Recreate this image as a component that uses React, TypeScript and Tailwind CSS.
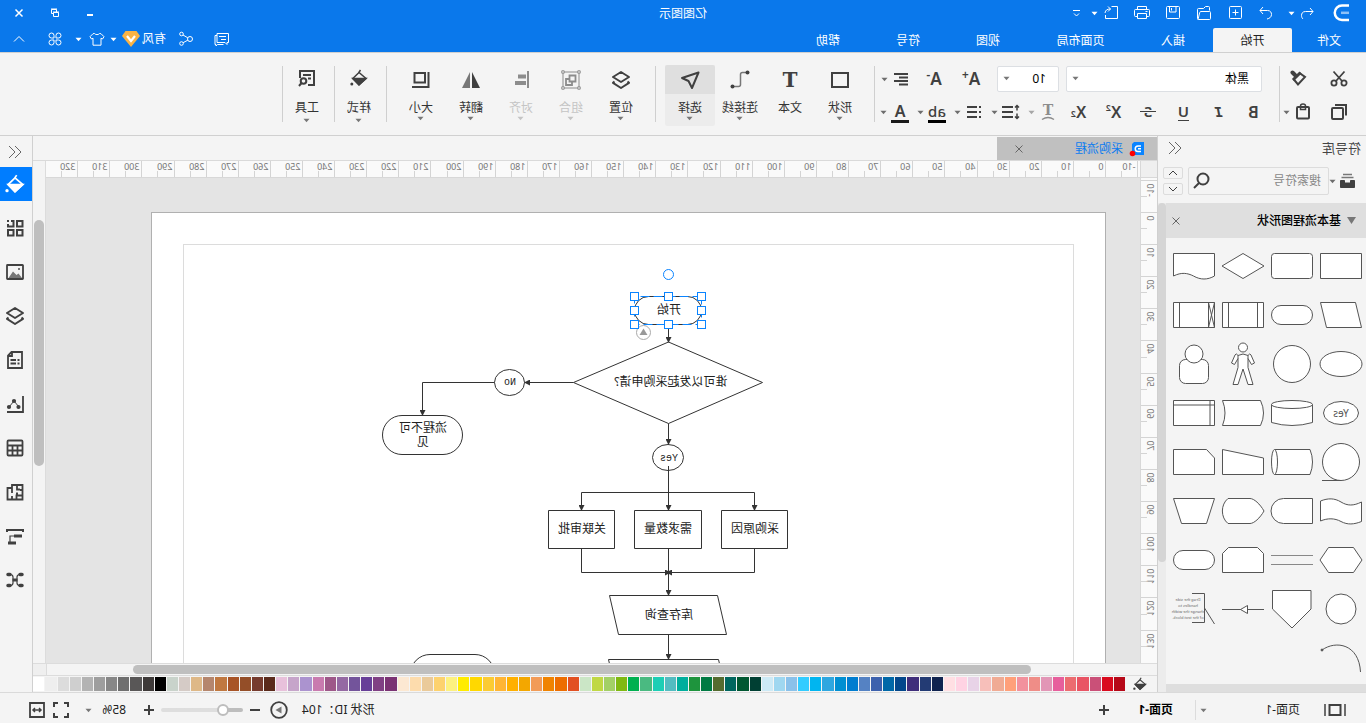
import type { ReactNode } from "react";
import { clsx } from "clsx";

const menuTabs = [
  { label: "文件", width: "w-[74px]" },
  { label: "开始", width: "w-[79px]", active: true },
  { label: "插入", width: "w-20" },
  { label: "页面布局", width: "w-[105px]" },
  { label: "视图", width: "w-20" },
  { label: "符号", width: "w-20" },
  { label: "帮助", width: "w-20" },
];

const palette = [
  "#b60818", "#d90a1e", "#ca5078", "#e95464", "#ec6c70", "#e75f9c", "#e296b6", "#ef8d87", "#f2919d",
  "#ffa07a", "#f0ab94", "#f7bfba", "#e8d3e7", "#ffd3e3", "#ffdfe3", "#0f234f", "#233b74", "#402e7b",
  "#03478b", "#0068a8", "#3d61ad", "#5582c3", "#007dd0", "#008fd2", "#2ea7e0", "#00b5f0", "#33ccff",
  "#8ac1ea", "#9fd7f0", "#cdeaf6", "#003f33", "#005731", "#00665e", "#556b2f", "#007a43", "#1e943d",
  "#00ae9d", "#53bcc1", "#1dceb5", "#4aba81", "#00b050", "#80b911", "#a3d066", "#c0d844", "#cbe6c6",
  "#e25022", "#ed6d00", "#f08300", "#f29b57", "#f3a700", "#ffb000", "#ffb534", "#fbcb33", "#ffd800",
  "#ffec00", "#fdf180", "#fdd26e", "#eaca9a", "#fddcad", "#fce8d2", "#7a3273", "#804084", "#673f98",
  "#73549b", "#9569a3", "#9e5889", "#c97baf", "#ab93cf", "#c6a5ca", "#e8c1db", "#5a2a1b", "#763b2e",
  "#944e28", "#a85427", "#c07840", "#b5866d", "#deb887", "#d5cbc6", "#c9d3cb", "#000000", "#3e3a39",
  "#595757", "#6f6f6f", "#878787", "#9e9e9e", "#b3b3b3", "#cfcfcf", "#dcdcdc", "#eeeeee", "#ffffff",
];

type IconProps = {
  size?: number;
  stroke?: number;
  className?: string;
  children: ReactNode;
};

function Icon({ size = 18, stroke = 1.5, className, children }: IconProps) {
  return (
    <svg
      width={size}
      height={size}
      viewBox={`0 0 ${size} ${size}`}
      fill="none"
      stroke="currentColor"
      strokeWidth={stroke}
      className={clsx("shrink-0", className)}
      aria-hidden="true"
    >
      {children}
    </svg>
  );
}

function Caret({ className }: { className?: string }) {
  return (
    <svg width="7" height="5" viewBox="0 0 7 5" className={clsx("shrink-0", className)} aria-hidden="true">
      <path d="M.5.8h6L3.5 4.2z" fill="currentColor" />
    </svg>
  );
}

function Bucket({ size = 18 }: { size?: number }) {
  return (
    <svg width={size} height={size} viewBox="0 0 18 18" fill="none" stroke="currentColor" strokeWidth="1.5" className="shrink-0" aria-hidden="true">
      <path d="M7.5 1l2 3M9 3.5l6.2 6L9 15.8 2 9.5z" />
      <path d="M2 9.5h13.2L9 16z" fill="currentColor" />
      <circle cx="16.2" cy="15" r="1.5" fill="currentColor" stroke="none" />
    </svg>
  );
}

function Layers() {
  return (
    <Icon size={20} stroke={2}>
      <path d="M10 2l8 5-8 5-8-5zM3.5 11.5L2 12.8l8 5.2 8-5.2-1.5-1.3" strokeLinejoin="round" />
    </Icon>
  );
}

type ToolProps = { label: string; className?: string; children: ReactNode };

function Tool({ label, className, children }: ToolProps) {
  return (
    <button type="button" aria-label={label} className={clsx("flex items-center justify-center h-[26px] shrink-0", className)}>
      {children}
    </button>
  );
}

function SplitTool({ label, className, children }: ToolProps) {
  return (
    <button type="button" aria-label={label} className={clsx("flex items-center h-[26px] shrink-0", className)}>
      <span className="w-[26px] flex items-center justify-center">{children}</span>
      <Caret className="opacity-75" />
    </button>
  );
}

function TitleBar() {
  return (
    <div className="grid grid-cols-[1fr_auto_1fr] items-center h-[26px] text-white">
      <div className="flex items-center">
        <svg width="16" height="20" viewBox="0 0 16 20" className="ml-[17px] mr-4" fill="none" stroke="#fff" aria-hidden="true">
          <path d="M0 3h6.5a7 7 0 0 0 0 0M16 3H9a7 7 0 0 0 0 14h7" strokeWidth="2.5" stroke="none" />
          <path d="M0 2.5h7a7 7 0 0 1 0 14.5H0" strokeWidth="2.5" />
          <path d="M0 9.800h8" strokeWidth="2.5" stroke="#8ec1f7" />
        </svg>
        <Tool label="撤销" className="w-5">
          <Icon size={16} stroke={1}><path d="M5 3L2 6.5 5 10M2 6.5h7.5c3 0 4 2 4 4 0 1.5-.5 2.5-1.5 3.5" /></Icon>
        </Tool>
        <Tool label="撤销列表" className="w-2.5"><Caret /></Tool>
        <Tool label="重做" className="w-[31px] ml-[5px]">
          <Icon size={16} stroke={1}><path d="M11 2l3 3.5L11 9M14 5.5H6.5c-3 0-4 2-4 4 0 2.5 2 4 4.5 4.5" /></Icon>
        </Tool>
        <Tool label="新建" className="w-[31px]">
          <Icon size={16} stroke={1}><rect x="1.5" y="1.5" width="12" height="12" rx="1" /><path d="M4.5 7.5h6M7.5 4.5v6" /></Icon>
        </Tool>
        <Tool label="打开" className="w-[31px]">
          <Icon size={16} stroke={1}><path d="M2.5 5.5v-3q0-1 1-1h3l2 2h5q1 0 1 1v9q0 1-1 1h-11q-1 0-1-1v-6q0-1 1-1H11q1 0 1.3 1l1.7 7" /></Icon>
        </Tool>
        <Tool label="保存" className="w-[31px]">
          <Icon size={16} stroke={1}><rect x="1.5" y="1.5" width="13" height="12" rx="1" /><path d="M5 1.5V7h6.500V1.5M9.5 3v2.5" /></Icon>
        </Tool>
        <Tool label="打印" className="w-[31px]">
          <Icon size={18} stroke={1}><path d="M4.5 5.5v-3h9v3M4.5 12.5h-2q-1 0-1-1v-5q0-1 1-1h13q1 0 1 1v5q0 1-1 1h-2M4.5 9.5h9v5h-9zM3.5 7.5h2" /></Icon>
        </Tool>
        <Tool label="导出" className="w-[31px]">
          <Icon size={16} stroke={1}><path d="M6 1.5H1.500v12h12V10M11 1.500L8.500 4 11 6.500M8.500 4c3.500 0 5 1 5.500 4M5.500 1.500h2" /></Icon>
        </Tool>
        <Tool label="导出选项" className="w-2.5 -ml-1"><Caret /></Tool>
        <Tool label="更多" className="w-5 ml-1">
          <Icon size={10} stroke={1}><path d="M1 2.5h7M2 5.5L4.5 8 7 5.5" /></Icon>
        </Tool>
      </div>
      <h1 className="text-xs pt-0.5">亿图图示</h1>
      <div className="flex justify-end">
        <Tool label="最小化" className="w-9"><Icon size={10} stroke={2}><path d="M2 7h6" /></Icon></Tool>
        <Tool label="还原" className="w-[34px]">
          <Icon size={10} stroke={1}><path d="M1.5 4.5h5v4h-5zM3.5 4V1.5h5v4H7M1 4h6M3 1h6" /></Icon>
        </Tool>
        <Tool label="关闭" className="w-[38px]"><Icon size={10}><path d="M1.5 1.5l7 7M8.5 1.5l-7 7" /></Icon></Tool>
      </div>
    </div>
  );
}

function MenuBar() {
  return (
    <div className="flex items-end justify-between h-[26px] text-white text-xs">
      <nav className="flex">
        {menuTabs.map((tab) => (
          <button
            key={tab.label}
            type="button"
            className={clsx("h-6 pt-0.5 text-center shrink-0", tab.width, tab.active && "bg-[#f4f4f4] text-[#222222] rounded-t-xs")}
          >
            {tab.label}
          </button>
        ))}
      </nav>
      <div className="flex items-center">
        <Tool label="评论" className="w-9">
          <Icon size={16} stroke={1}><path d="M1.5 2.5H13v9H5l-2 2v-2H1.500zM13 4.500h2v9h-1v1.500l-1.500-1.500h-6M4 5.500h7M4 8.500h5" /></Icon>
        </Tool>
        <Tool label="分享" className="w-9">
          <Icon size={16} stroke={1}><circle cx="4" cy="8" r="2.5" /><circle cx="12.5" cy="3" r="1.8" /><circle cx="12.5" cy="12.5" r="1.8" /><path d="M6.2 6.8L11 4M6.2 9.2l4.7 2.5" /></Icon>
        </Tool>
        <button type="button" className="flex items-center w-12 h-[26px] pl-0.5 gap-0.5">
          <span className="w-6 whitespace-nowrap">有风</span>
          <svg width="18" height="16" viewBox="0 0 18 16" className="shrink-0" aria-hidden="true">
            <path d="M3.5 0h11L18 5 9 16 0 5z" fill="#fab345" />
            <path d="M5 5l4 5 4-5" fill="none" stroke="#fff" strokeWidth="2.2" />
          </svg>
        </button>
        <Tool label="账户菜单" className="w-3"><Caret /></Tool>
        <Tool label="主题" className="w-[22px]">
          <Icon size={16} stroke={1}><path d="M5.5 2.5c1 1.5 4 1.5 5 0l1.500.2 3 3-1.500 2.300-1.500-.8v7H4v-7L2.500 8 1 5.700l3-3z" /></Icon>
        </Tool>
        <Tool label="主题菜单" className="w-3.5"><Caret /></Tool>
        <Tool label="应用" className="w-[34px]">
          <Icon size={16} stroke={1}>
            <path d="M7 7H4.5A2.5 2.5 0 1 1 7 4.5zM9 7h2.5A2.5 2.5 0 1 0 9 4.5zM7 9H4.5A2.5 2.5 0 1 0 7 11.5zM9 9h2.5A2.5 2.5 0 1 1 9 11.5z" />
          </Icon>
        </Tool>
        <Tool label="收起功能区" className="w-[38px]"><Icon size={12} stroke={1}><path d="M1 8.5L6 3.5l5 5" /></Icon></Tool>
      </div>
    </div>
  );
}

function Divider() {
  return <div className="w-px h-14 mt-px bg-[#cfcfcf] shrink-0" />;
}

type RibbonButtonProps = {
  label: string;
  icon: ReactNode;
  active?: boolean;
  disabled?: boolean;
  caret?: boolean;
  loose?: boolean;
};

function RibbonButton({ label, icon, active, disabled, caret = true, loose }: RibbonButtonProps) {
  return (
    <button
      type="button"
      disabled={disabled}
      className={clsx(
        "w-[50px] h-[61px] flex flex-col items-center shrink-0 rounded-xs overflow-hidden",
        active && "bg-[#ececec]",
        disabled ? "text-[#c4c4c4]" : "text-[#333333]"
      )}
    >
      <span
        className={clsx(
          "w-full h-[29px] flex items-center justify-center",
          active && "bg-[#dfdfdf]",
          loose && "pb-1",
          disabled ? "text-[#8c8c8c]" : "text-[#404040]"
        )}
      >
        {icon}
      </span>
      <span className="mt-1.5 h-4 leading-4 whitespace-nowrap">{label}</span>
      {caret && <Caret className={clsx(!disabled && "text-[#777777]", loose && "mt-0.5")} />}
    </button>
  );
}

function Ribbon() {
  return (
    <div className="flex items-start h-[84px] pt-3 border-y border-[#d0d0d0] text-[#404040] text-xs">
      <div className="w-[86px] pt-px shrink-0 flex flex-col gap-[7px]">
        <div className="flex pl-3.5">
          <Tool label="剪切" className="w-[26px]">
            <Icon stroke={1.8}><circle cx="4" cy="13" r="2.6" /><circle cx="14" cy="13" r="2.6" /><path d="M3.5 1.5L12 11M14.500 1.500L6 11" /></Icon>
          </Tool>
          <Tool label="格式刷" className="w-[26px] ml-[15px]">
            <Icon stroke={2}>
              <path d="M12 5l2.500-2.500" strokeWidth="4" strokeLinecap="round" />
              <path d="M7.500 3L2 7l7 7.500L13.500 9" />
              <path d="M7.500 3.500L13 9" strokeWidth="3" strokeLinecap="square" />
            </Icon>
          </Tool>
        </div>
        <div className="flex pl-3.5">
          <Tool label="复制" className="w-[26px]">
            <Icon stroke={2}><rect x="5" y="5" width="11" height="11" rx="1" /><path d="M2 12.5V2h11" /></Icon>
          </Tool>
          <Tool label="粘贴" className="w-[26px] ml-2.5">
            <Icon stroke={2}><rect x="3" y="4" width="12" height="11.5" rx="1" /><path d="M6.5 3v3.500h5V3a2.500 2 0 0 0-5 0z" strokeWidth="1.5" /></Icon>
          </Tool>
          <Caret className="mt-[11px] opacity-75" />
        </div>
      </div>
      <Divider />

      <div className="w-[404px] pt-px shrink-0 flex flex-col gap-[7px]">
        <div className="flex items-center pl-[17px]">
          <label className="relative flex">
            <select aria-label="字体" className="appearance-none w-[196px] h-[26px] pl-3 bg-white border border-[#dcdfe3] rounded-xs text-black">
              <option>黑体</option>
            </select>
            <Caret className="absolute right-1.5 top-[10px] text-[#777777]" />
          </label>
          <label className="relative flex ml-[7px]">
            <select aria-label="字号" className="appearance-none w-[62px] h-[26px] pl-3 bg-white border border-[#dcdfe3] rounded-xs text-black">
              <option>10</option>
            </select>
            <Caret className="absolute right-1.5 top-[10px] text-[#777777]" />
          </label>
          <Tool label="增大字号" className="w-[26px] ml-[13px] text-[17px] font-semibold">A<sup className="text-xs -top-1">+</sup></Tool>
          <Tool label="减小字号" className="w-[26px] ml-[11px] text-[17px] font-semibold">A<sup className="text-xs -top-1">-</sup></Tool>
          <SplitTool label="对齐方式" className="ml-[7px]">
            <Icon size={14} stroke={2}><path d="M0 2h14M0 5.5h9M0 9h14M0 12.5h9" /></Icon>
          </SplitTool>
        </div>
        <div className="flex items-center pl-2">
          <Tool label="加粗" className="w-[35px] text-base font-semibold">B</Tool>
          <Tool label="斜体" className="w-[35px] text-sm italic font-bold font-['DejaVu_Sans_Mono',monospace]">I</Tool>
          <Tool label="下划线" className="w-[35px]">
            <span className="w-[11px] h-[17px] leading-[15px] text-[15px] font-semibold border-b border-current">U</span>
          </Tool>
          <Tool label="删除线" className="w-[35px]">
            <svg width="18" height="22" viewBox="0 0 18 22" aria-hidden="true">
              <text x="9" y="16" textAnchor="middle" fontSize="15" fontWeight="600" fill="currentColor">S</text>
              <path d="M1 10.5h16" stroke="#f4f4f4" strokeWidth="3" />
              <path d="M1 10.5h16" stroke="currentColor" />
            </svg>
          </Tool>
          <Tool label="上标" className="w-[35px] text-base font-semibold">X<sup className="text-[9px] -top-1">2</sup></Tool>
          <Tool label="下标" className="w-[35px] text-base font-semibold">X<sub className="text-[9px]">2</sub></Tool>
          <div className="flex gap-1">
            <SplitTool label="文字效果" className="text-[#8c8c8c]">
              <svg width="16" height="22" viewBox="0 0 16 22" aria-hidden="true">
                <text x="8" y="14" textAnchor="middle" fontSize="14" fontWeight="700" fontFamily="DejaVu Serif, serif" fill="currentColor">T</text>
                <path d="M2 18.5q6-4 12 0" fill="none" stroke="currentColor" strokeWidth="1.5" />
              </svg>
            </SplitTool>
            <SplitTool label="行距">
              <Icon><path d="M7 4h11M7 9h11M7 14h11" strokeWidth="2" /><path d="M3 2.5v5M3 10.5v5M1 4.5l2-2 2 2M1 13.5l2 2 2-2" /></Icon>
            </SplitTool>
            <SplitTool label="项目符号">
              <Icon size={16} stroke={2}><path d="M5 3h10M5 8h10M5 13h10M1 3h2M1 8h2M1 13h2" /></Icon>
            </SplitTool>
            <SplitTool label="突出显示">
              <span className="w-[18px] h-[21px] leading-[18px] text-[15px] font-medium text-center border-b-[3px] border-black">ab</span>
            </SplitTool>
            <SplitTool label="字体颜色">
              <span className="w-[18px] h-[21px] leading-[18px] text-base font-semibold text-center border-b-[3px] border-[#1a1a1a]">A</span>
            </SplitTool>
          </div>
        </div>
      </div>
      <Divider />

      <div className="flex w-[218px] pl-[9px] shrink-0">
        <RibbonButton label="形状" icon={<Icon size={20} stroke={2}><path d="M2 3h16v14H2z" /></Icon>} />
        <RibbonButton label="文本" caret={false} icon={<span className="text-xl leading-none font-bold font-['DejaVu_Serif',serif]">T</span>} />
        <RibbonButton
          label="连接线"
          icon={<Icon size={20}><path d="M3 2.5h4.500q2 0 2 2v10q0 2 2 2H17" stroke="#777777" /><circle cx="2.500" cy="2.500" r="2" fill="currentColor" stroke="none" /><circle cx="17.500" cy="16.500" r="2" fill="currentColor" stroke="none" /></Icon>}
        />
        <RibbonButton label="选择" active icon={<Icon size={20} stroke={2}><path d="M1.5 2.500l16.500 5.500-6.500 3-3.500 7z" strokeLinejoin="round" /></Icon>} />
      </div>
      <Divider />

      <div className="flex w-[268px] pl-[9px] shrink-0">
        <RibbonButton label="位置" icon={<Layers />} />
        <RibbonButton
          label="组合"
          disabled
          icon={<Icon size={20} stroke={1}><path d="M2 2h16v16H2z" /><path d="M5.5 5.5h6v6h-6zM9 12v3h6V9h-3" strokeWidth="1.8" /><path d="M.8.8h2.400v2.400H.8zM16.800.8h2.400v2.400h-2.400zM.8 16.800h2.400v2.400H.8zM16.800 16.800h2.400v2.400h-2.400z" fill="#f4f4f4" /></Icon>}
        />
        <RibbonButton label="对齐" disabled icon={<Icon size={20}><path d="M3 1v17" strokeWidth="2" /><path d="M5 6.5h8M5 13h11" strokeWidth="4" /></Icon>} />
        <RibbonButton label="翻转" icon={<Icon size={20}><path d="M9 2v16H1z" fill="currentColor" stroke="none" /><path d="M11 2v16h8z" fill="#777777" stroke="none" /></Icon>} />
        <RibbonButton label="大小" icon={<Icon size={20} stroke={2}><path d="M6 3h10.5v9.5H6zM2.5 2v15H19" /></Icon>} />
      </div>
      <Divider />
      <div className="w-[51px] pl-0.5 shrink-0"><RibbonButton label="样式" loose icon={<Bucket size={18} />} /></div>
      <Divider />
      <div className="w-[51px] pl-0.5 shrink-0">
        <RibbonButton label="工具" loose icon={<Icon size={18} stroke={2}><path d="M8 16H2V2h14v7M5 6h8M5 9.5h3" /><circle cx="12.5" cy="12" r="2.8" /><path d="M14.5 14l2.5 3" /></Icon>} />
      </div>
      <Divider />
    </div>
  );
}

/* every symbol sits in a 49 x 49 cell */
const symbols: { name: string; art: ReactNode }[] = [
  { name: "流程", art: <path d="M4.5 11.5h41v25h-41z" /> },
  { name: "圆角流程", art: <rect x="4.5" y="11.5" width="41" height="25" rx="3" /> },
  { name: "判定", art: <path d="M4 24L25 11.5 46 24 25 36.5z" /> },
  { name: "文档", art: <path d="M4.5 11.5h41V34c-8-4-14-3-20 0-7 4-14 4-21 0z" /> },
  { name: "数据", art: <path d="M10.5 11.5h35l-6 25h-35z" /> },
  { name: "终结符", art: <rect x="4.5" y="14.5" width="41" height="19" rx="9.5" /> },
  { name: "预定义流程", art: <path d="M4.5 11.5h41v25h-41zM10.5 11.5v25M39.5 11.5v25" /> },
  { name: "准备流程", art: <path d="M4.5 11.5h41v25h-41zM10.5 11.5v25M39.5 11.5v25M4.5 11.5l6 25M10.5 11.5l-6 25" /> },
  { name: "椭圆", art: <ellipse cx="25" cy="24" rx="21" ry="12.5" /> },
  { name: "圆", art: <circle cx="25" cy="24" r="18.5" /> },
  {
    name: "人",
    art: (
      <>
        <circle cx="25" cy="7.5" r="4.5" />
        <path d="M20 15.5q5-3 10 0v12l5 17h-5L25 29l-5 15.5h-5l5-17zM20 15.5q-2-3-3-.5l-3.500 8 3 1.500 3.500-6M30 15.500q2-3 3-.5l3.500 8-3 1.500-3.500-6" />
      </>
    ),
  },
  { name: "用户", art: <><rect x="10.5" y="19.5" width="29" height="24" rx="6" /><circle cx="25" cy="14" r="9" /></> },
  {
    name: "是",
    art: (
      <>
        <ellipse cx="25" cy="24" rx="17.5" ry="11.5" />
        <text x="25" y="28" textAnchor="middle" fontSize="10" fill="#555555" stroke="none">Yes</text>
      </>
    ),
  },
  { name: "数据库", art: <><path d="M4.5 15.5v18q20.5 6 41 0v-18" /><ellipse cx="25" cy="15.5" rx="20.5" ry="4" /></> },
  { name: "存储数据", art: <path d="M7.5 11.5h38q-5 12.5 0 25h-38q-6-12.5 0-25z" /> },
  { name: "内部存储", art: <path d="M4.5 11.5h41v25h-41zM4.5 16h41M9 11.5v25" /> },
  { name: "顺序数据", art: <><circle cx="25" cy="24" r="18.5" /><path d="M25 42.5h19" /></> },
  { name: "直接数据", art: <><path d="M42.5 11.5H7q-5 12.5 0 25h35.5" /><ellipse cx="42.5" cy="24" rx="3" ry="12.5" /></> },
  { name: "手动输入", art: <path d="M4.5 20l41-8.5v25h-41z" /> },
  { name: "卡片", art: <path d="M12.5 11.5h33v25h-41V20z" /> },
  { name: "纸带", art: <path d="M4.5 15c8 4 14 4 20.5 0s13-4 20.5-1v20c-7-3-14-3-20.5.5s-13 3-20.5 0z" /> },
  { name: "延期", art: <path d="M4.5 11.5h29a12.5 12.5 0 0 1 0 25h-29z" /> },
  { name: "显示", art: <path d="M4 24c4-7 10-12.5 14-12.5h22c7.5 6 7.5 19 0 25H18C14 36.5 8 31 4 24z" /> },
  { name: "手动操作", art: <path d="M4.5 11.5h41l-8 25h-25z" /> },
  { name: "准备", art: <path d="M4 24l8.5-12.5h25L46 24l-8.5 12.5h-25z" /> },
  { name: "并行", art: <path d="M4 19.5h42M4 28.5h42" stroke="#888888" /> },
  { name: "循环界限", art: <path d="M10.5 11.5h29l6 6v19h-41v-19z" /> },
  { name: "开始终结", art: <rect x="4.5" y="14.5" width="41" height="19" rx="9.5" /> },
  { name: "页面内引用", art: <circle cx="25" cy="24" r="15" /> },
  { name: "跨页引用", art: <path d="M6 5.5h38.5V24L25 43 6 24z" /> },
  { name: "箭头", art: <><path d="M4 24.5h42" /><path d="M20.5 20.5v8l7-4z" /></> },
  {
    name: "注释",
    art: (
      <>
        <path d="M27 8.5H14.5v29H27M14.5 23l-10 16" fill="none" />
        <g fontSize="4" textAnchor="middle" fill="#666666" stroke="none">
          <text x="31" y="16">Drag the side</text>
          <text x="31" y="22">handles to</text>
          <text x="31" y="28">change the width</text>
          <text x="31" y="34">of the text block.</text>
        </g>
      </>
    ),
  },
  { name: "弧线", art: <><path d="M44 16C30 6 7 10 5.5 38" fill="none" /><circle cx="44" cy="16" r="1" fill="#555555" /></> },
];

function Chevrons() {
  return (
    <Icon size={14} stroke={1} className="text-[#666666]">
      <path d="M7 1L1 7l6 6M13 1L7 7l6 6" />
    </Icon>
  );
}

function SymbolLibrary() {
  return (
    <aside className="w-[209px] shrink-0 flex flex-col border-r border-[#d0d0d0] text-xs">
      <div className="flex items-center justify-between h-6 pl-[5px] pr-2.5">
        <h2 className="pt-0.5 text-[13px] text-[#444444]">符号库</h2>
        <button type="button" aria-label="收起符号库"><Chevrons /></button>
      </div>
      <div className="flex items-center h-[43px] pl-[11px] pb-[5px] pt-1 text-[#404040]">
        <button type="button" aria-label="符号库菜单" className="flex items-center w-[26px] gap-1">
          <svg width="15" height="16" viewBox="0 0 15 16" fill="none" stroke="currentColor" className="shrink-0" aria-hidden="true">
            <path d="M3 1.5h9M1.5 4.5h12" strokeWidth="1.5" stroke="#777777" />
            <path d="M.5 7.500h4V10h6V7.500h4v7H.5z" fill="currentColor" />
          </svg>
          <Caret className="opacity-75" />
        </button>
        <div className="flex items-center w-[141px] h-7 border border-[#dcdcdc] rounded-xs pl-[7px] pr-1">
          <input aria-label="搜索符号" placeholder="搜索符号" className="min-w-0 flex-1 outline-none placeholder:text-[#888888]" />
          <button type="button" aria-label="搜索">
            <Icon size={18} stroke={2}><circle cx="8" cy="7" r="5.5" /><path d="M12 11l5 5" /></Icon>
          </button>
        </div>
        <div className="flex flex-col gap-1 ml-[5px]">
          <button type="button" aria-label="上一个" className="flex items-center justify-center w-5 h-3 border border-[#dcdcdc] rounded-xs">
            <Icon size={10} stroke={1}><path d="M1 7l4-4 4 4" /></Icon>
          </button>
          <button type="button" aria-label="下一个" className="flex items-center justify-center w-5 h-3 border border-[#dcdcdc] rounded-xs">
            <Icon size={10} stroke={1}><path d="M1 3l4 4 4-4" /></Icon>
          </button>
        </div>
      </div>
      <div className="flex-1 min-h-0 flex">
        <div className="w-[200px] flex flex-col overflow-hidden">
          <div className="flex items-center h-[35px] shrink-0 pl-2.5 pr-1.5 bg-[#dfdfdf]">
            <svg width="9" height="7" viewBox="0 0 9 7" aria-hidden="true"><path d="M0 0h9L4.5 7z" fill="#777777" /></svg>
            <h3 className="ml-1.5 flex-1 font-medium text-black">基本流程图形状</h3>
            <button type="button" aria-label="关闭分类" className="text-[#666666]">
              <Icon size={8} stroke={1}><path d="M.5.5l7 7M7.5.5l-7 7" /></Icon>
            </button>
          </div>
          <div className="flex-1 min-h-0 overflow-hidden grid grid-cols-[repeat(4,49px)] auto-rows-[49px] pt-1">
            {symbols.map((symbol) => (
              <button key={symbol.name} type="button" aria-label={symbol.name}>
                <svg width="49" height="49" viewBox="0 0 49 49" fill="#fff" stroke="#555555" aria-hidden="true">
                  {symbol.art}
                </svg>
              </button>
            ))}
          </div>
          <div className="h-2 shrink-0 bg-[#dedede]" />
        </div>
        <div className="w-2 bg-[#ececec]">
          <div className="w-2 h-[359px] rounded-full bg-[#d5d5d5]" />
        </div>
      </div>
    </aside>
  );
}

const PX_PER_MM = 3.212;
const RULER_ORIGIN = 34;
const columnMarks = Array.from({ length: 34 }, (_, i) => i * 10 - 10);
const rowMarks = Array.from({ length: 15 }, (_, i) => i * 10 - 10);
const at = (mm: number) => Math.round(RULER_ORIGIN + mm * PX_PER_MM) + 0.5;

function HorizontalRuler() {
  return (
    <div className="h-[17px] shrink-0 bg-[#fafafa] border-b border-[#d8d8d8]">
      <svg className="block w-full h-4" stroke="#d4d4d4" aria-hidden="true">
        {columnMarks.map((mm) => (
          <g key={mm}>
            <path d={`M${at(mm)} 0v16M${at(mm + 5)} 10v6`} />
            <text x={at(mm) + 2} y="9" fontSize="9" fill="#777777" stroke="none">{mm}</text>
          </g>
        ))}
      </svg>
    </div>
  );
}

function VerticalRuler() {
  return (
    <div className="w-[17px] shrink-0 flex flex-col border-r border-[#d8d8d8]">
      <div className="h-[17px] shrink-0 bg-[#efefef] border-b border-[#d8d8d8]" />
      <svg className="block flex-1 min-h-0 w-4 bg-[#fafafa]" stroke="#d4d4d4" aria-hidden="true">
        {rowMarks.map((mm) => (
          <g key={mm}>
            <path d={`M0 ${at(mm)}h16M10 ${at(mm + 5)}h6`} />
            <text transform={`translate(10 ${at(mm) + 3}) rotate(-90)`} textAnchor="end" fontSize="9" fill="#777777" stroke="none">
              {mm}
            </text>
          </g>
        ))}
      </svg>
    </div>
  );
}

const handles = [
  [403.5, 83.5], [436.5, 83.5], [470.5, 83.5],
  [403.5, 97.5], [470.5, 97.5],
  [403.5, 111.5], [436.5, 111.5], [470.5, 111.5],
];

const connectors = [
  "M436.5 111.5V129",
  "M531.5 169.5H580",
  "M610.5 169.5h72V202",
  "M436.5 210.5V231",
  "M436.5 253V297",
  "M436.5 279.5h-86V297",
  "M436.5 279.5h87V297",
  "M350.5 335.5v24H438",
  "M523.5 335.5v24H435",
  "M436.5 335.5V382",
  "M436.5 421.5V446",
];

function Flowchart() {
  return (
    <svg width="953" height="1300" viewBox="0 0 953 1300" className="block" fill="none" stroke="#333333">
      <defs>
        <marker id="arrow" markerUnits="userSpaceOnUse" markerWidth="6" markerHeight="6" refX="5" refY="3" orient="auto">
          <path d="M0 0l6 3-6 3z" fill="#333333" stroke="none" />
        </marker>
      </defs>
      <rect x="31.5" y="31.5" width="890" height="1230" stroke="#dcdcdc" />

      <rect x="403.5" y="83.5" width="67" height="28" rx="14" />
      <path d="M342.5 169.5l94-40.5 95 40.5-95 41z" />
      <ellipse cx="595.5" cy="169.5" rx="15" ry="13" />
      <rect x="642.5" y="202.5" width="80" height="39" rx="19.5" />
      <ellipse cx="437" cy="244.5" rx="15.5" ry="13" />
      <path d="M317.5 297.5h66v38h-66zM403.5 297.5h67v38h-67zM490.5 297.5h66v38h-66z" />
      <path d="M378.5 421.5l9-39h108l-9 39zM377.5 485.5l9-39h110l-9 39z" />
      <rect x="610.5" y="441.5" width="84" height="39" rx="19.5" />

      {connectors.map((d) => (
        <path key={d} d={d} markerEnd="url(#arrow)" />
      ))}

      <g fontSize="12" textAnchor="middle" fill="#222222" stroke="none">
        <text x="436" y="101">开始</text>
        <text x="434" y="173">谁可以发起采购申请?</text>
        <text x="682" y="219">流程不可</text>
        <text x="682" y="233">见</text>
        <text x="350" y="320">采购原因</text>
        <text x="437" y="320">需求数量</text>
        <text x="523" y="320">关联审批</text>
        <text x="436" y="406">库存查询</text>
        <g fontSize="10" fontFamily="Liberation Mono, monospace">
          <text x="595" y="172">No</text>
          <text x="436" y="248">Yes</text>
        </g>
      </g>

      <rect x="403.5" y="83.5" width="67" height="28" stroke="#0a84ff" strokeDasharray="9 4" />
      <circle cx="461.5" cy="119.5" r="7" fill="#fff" stroke="#aaaaaa" />
      <path d="M461.5 115.5l4 6.5h-8z" fill="#999999" stroke="none" />
      <g fill="#fff" stroke="#0a84ff">
        <circle cx="436.5" cy="61.5" r="5" />
        {handles.map(([x, y]) => (
          <rect key={`${x}-${y}`} x={x - 4} y={y - 4} width="8" height="8" />
        ))}
      </g>
    </svg>
  );
}

function Workspace() {
  return (
    <main className="flex-1 min-w-0 flex flex-col">
      <div className="flex h-[25px] shrink-0 pt-px border-b border-[#dadada]">
        <div className="flex items-center w-40 pl-[13px] pr-[18px] bg-[#c0c0c0] text-xs">
          <svg width="15" height="16" viewBox="0 0 15 16" className="shrink-0" aria-hidden="true">
            <path d="M0 1h10l2 2v11H0z" fill="#0a84ff" />
            <path d="M3 5h3a2.5 2.5 0 0 1 0 5.5H3M3 7.8h3" fill="none" stroke="#fff" strokeWidth="1.5" />
            <circle cx="11.5" cy="12.5" r="2.8" fill="#ff0000" />
          </svg>
          <button type="button" className="ml-1.5 flex-1 text-left text-[#0a7bf0]">采购流程</button>
          <button type="button" aria-label="关闭文档" className="text-[#666666]">
            <Icon size={8} stroke={1}><path d="M.5.5l7 7M7.5.5l-7 7" /></Icon>
          </button>
        </div>
      </div>
      <div className="flex-1 min-h-0 flex">
        <VerticalRuler />
        <div className="flex-1 min-w-0 flex flex-col">
          <HorizontalRuler />
          <div className="flex-1 min-h-0 overflow-hidden bg-[#e4e4e4] pl-[34px] pt-[34px]">
            <div className="w-[955px] bg-white border border-[#b0b0b0]">
              <Flowchart />
            </div>
          </div>
        </div>
        <div className="w-[13px] shrink-0 border-l border-[#dcdcdc] pt-[59px] pl-px">
          <div className="w-2.5 h-[246px] rounded-full bg-[#bfbfbf]" />
        </div>
      </div>
      <div className="h-[13px] shrink-0 flex border-y border-[#dcdcdc]">
        <div className="flex-1 flex items-center pl-[126px] pr-[86px] border-r border-[#dcdcdc]">
          <div className="flex-1 h-[9px] rounded-full bg-[#bfbfbf]" />
        </div>
        <div className="w-[13px] bg-[#efefef]" />
      </div>
      <div className="h-4 shrink-0 flex items-center pl-2.5 pr-px text-[#404040]">
        <button type="button" aria-label="填充颜色" className="mr-2"><Bucket size={14} /></button>
        <div className="flex-1 flex gap-px">
          {palette.map((color) => (
            <button key={color} type="button" aria-label={color} className="flex-1 h-3.5" style={{ backgroundColor: color }} />
          ))}
        </div>
      </div>
    </main>
  );
}

const railItems = [
  {
    label: "符号",
    icon: <Icon stroke={2}><path d="M1.5 2H7v5.5H1.500zM1.500 11H7v5.500H1.500zM10.500 11H16v5.500h-5.500zM13 2h-2.500v5.500H16V5M15 2h2" /></Icon>,
  },
  {
    label: "图片",
    icon: <Icon stroke={1.8}><rect x="1" y="2" width="16" height="14" rx=".5" /><path d="M2 15l3.500-4.500 2 1.500L11 8.500l4.500 6.500z" fill="#777777" stroke="none" /><path d="M4 6h2" stroke="#777777" /></Icon>,
  },
  { label: "图层", icon: <Layers /> },
  {
    label: "页面",
    icon: <Icon stroke={1.8}><path d="M2 1h10.500L16 4.500V17H2zM12 1v4h4M8 9h5.500M8 12.500h5.500M4.500 9h2M4.500 12.500h2" transform="matrix(1 0 0 1 0 0)" /></Icon>,
  },
  {
    label: "图表",
    icon: <Icon stroke={1.8}><path d="M1 1v16h16" /><path d="M5 12l5-6 5 6" strokeWidth="1" /><circle cx="5.5" cy="12" r="1.2" fill="currentColor" /><circle cx="10" cy="6" r="1.2" fill="currentColor" /><circle cx="15" cy="12" r="1.2" fill="currentColor" /></Icon>,
  },
  {
    label: "表格",
    icon: <Icon stroke={1.8}><rect x="1.5" y="1.5" width="15" height="15" rx="1" /><path d="M1.5 6.5h15M1.5 11.5h15M6.5 6.5v10M11.5 6.5v10" /></Icon>,
  },
  {
    label: "平面图",
    icon: <Icon stroke={1.8}><path d="M1.5 2H12v3h4.500v11.500h-15zM1.500 7H4M7 2v4.500H4M1.500 12.500h6v4M6 10.500h2M12 6v4M12 13v3" /></Icon>,
  },
  {
    label: "甘特图",
    icon: <Icon stroke={2}><path d="M0 3h18M1 3v2M17 3v2" /><path d="M2 9h8M8 16h8" strokeWidth="3" /><path d="M9 9h5v6" strokeWidth="1.2" /></Icon>,
  },
  {
    label: "思维导图",
    icon: (
      <Icon stroke={1.2}>
        <path d="M4 3.5q3 0 3 2.5v6q0 2.5-3 2.5M14 3.5q-3 0-3 2.5v6q0 2.5 3 2.5" />
        <path d="M2 3.5h2M14 3.5h2M2 14.5h2M14 14.5h2" strokeWidth="3.5" strokeLinecap="round" />
        <path d="M6.5 9h5" strokeWidth="3" />
      </Icon>
    ),
  },
];

function ToolRail() {
  return (
    <aside className="w-[33px] shrink-0 flex flex-col border-l border-[#d0d0d0] text-[#404040]">
      <button type="button" aria-label="展开面板" className="h-[31px] pl-0.5 flex items-center justify-center"><Chevrons /></button>
      <button type="button" aria-label="填充" className="h-[34px] mb-[5px] pl-0.5 flex items-center justify-center bg-[#007dff] text-white">
        <Bucket size={20} />
      </button>
      {railItems.map((item) => (
        <button key={item.label} type="button" aria-label={item.label} className="h-11 pl-0.5 flex items-center justify-center">
          {item.icon}
        </button>
      ))}
    </aside>
  );
}

function StatusBar() {
  return (
    <footer className="flex items-center h-[31px] shrink-0 pt-1 border-t border-[#dadada] text-xs text-[#404040]">
      <button type="button" aria-label="页面视图" className="ml-5">
        <svg width="22" height="14" viewBox="0 0 22 14" fill="none" stroke="currentColor" aria-hidden="true">
          <path d="M5.5 2h11v10h-11z" strokeWidth="2" />
          <path d="M1 1v12M21 1v12" strokeWidth="1.5" />
        </svg>
      </button>
      <button type="button" className="flex items-center justify-between ml-6 w-[100px] text-[#222222]">
        页面-1
        <Caret className="text-[#777777]" />
      </button>
      <div className="w-px h-5 ml-1 bg-[#dcdcdc]" />
      <button type="button" className="ml-[22px] font-bold text-black">页面-1</button>
      <button type="button" aria-label="添加页面" className="ml-[29px]"><Icon size={10} stroke={2}><path d="M0 5h10M5 0v10" /></Icon></button>
      <div className="flex-1" />
      <p className="text-[#222222] whitespace-nowrap">形状 ID：104</p>
      <button type="button" aria-label="演示" className="ml-3.5">
        <Icon stroke={1.8}><circle cx="9" cy="9" r="7.8" /><path d="M6.5 5.5l6 3.5-6 3.5z" fill="#777777" stroke="none" /></Icon>
      </button>
      <button type="button" aria-label="缩小" className="ml-2.5"><Icon size={10} stroke={2}><path d="M0 5h10" /></Icon></button>
      <input
        type="range"
        aria-label="缩放"
        min={0}
        max={100}
        defaultValue={20}
        className="appearance-none w-[82px] h-1 ml-[7px] rounded-full bg-linear-to-r from-[#bdbdbd] from-24% to-[#dedede] to-24% [&::-webkit-slider-thumb]:appearance-none [&::-webkit-slider-thumb]:size-3 [&::-webkit-slider-thumb]:rounded-full [&::-webkit-slider-thumb]:bg-white [&::-webkit-slider-thumb]:border-2 [&::-webkit-slider-thumb]:border-[#bdbdbd]"
      />
      <button type="button" aria-label="放大" className="ml-[7px]"><Icon size={10} stroke={2}><path d="M0 5h10M5 0v10" /></Icon></button>
      <button type="button" className="flex items-center ml-[18px] w-[41px] justify-between text-[#222222]">
        85%
        <Caret className="text-[#777777]" />
      </button>
      <button type="button" aria-label="全屏" className="ml-4">
        <Icon size={16} stroke={2}><path d="M1 5V1h4M11 1h4v4M15 11v4h-4M5 15H1v-4" /></Icon>
      </button>
      <button type="button" aria-label="适合宽度" className="ml-2 mr-[29px]">
        <Icon size={16} stroke={1.8}><path d="M1 1h14v14H1z" /><path d="M4 8h8M6 6L4 8l2 2M10 6l2 2-2 2" strokeWidth="1.5" /></Icon>
      </button>
    </footer>
  );
}

export default function App() {
  return (
    <div className="h-screen flex flex-col overflow-hidden -scale-x-100 bg-[#f4f4f4] font-['Noto_Sans','Noto_Sans_CJK_SC',sans-serif]">
      <header className="shrink-0">
        <div className="bg-[#0a78eb]">
          <TitleBar />
          <MenuBar />
        </div>
        <Ribbon />
      </header>
      <div className="flex-1 min-h-0 flex">
        <SymbolLibrary />
        <Workspace />
        <ToolRail />
      </div>
      <StatusBar />
    </div>
  );
}
